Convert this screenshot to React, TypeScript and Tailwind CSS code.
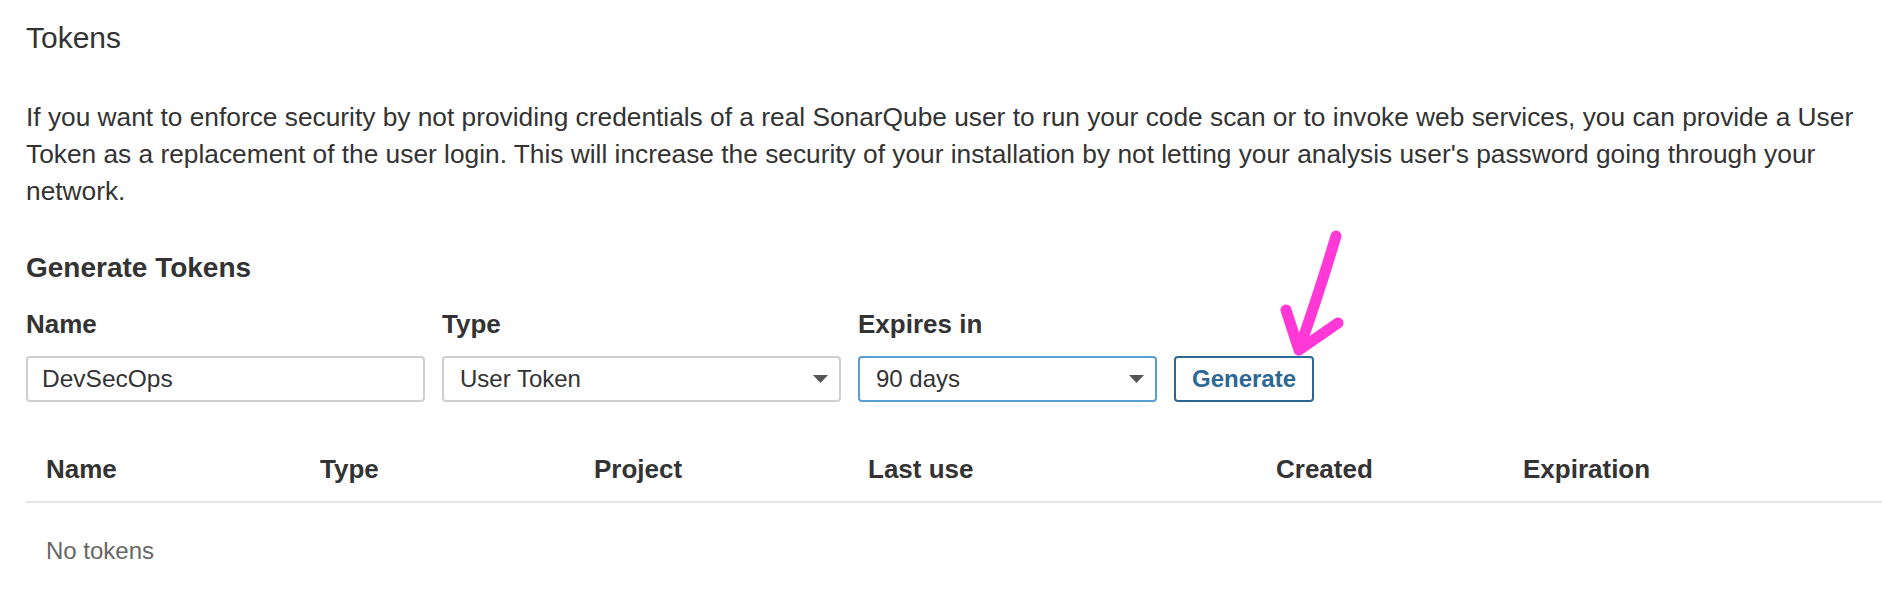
import React from "react";

function Caret() {
  return (
    <svg width="15" height="8" viewBox="0 0 15 8" className="shrink-0">
      <polygon points="0,0 15,0 7.5,8" fill="#555555" />
    </svg>
  );
}

export default function App() {
  const cols = ["Name", "Type", "Project", "Last use", "Created", "Expiration"];
  return (
    <div className="relative w-[1882px] h-[610px] overflow-hidden bg-white font-['Liberation_Sans',Arial,sans-serif] text-[#333333]">
      <div className="pl-[26px] pt-[21px]">
        <h2 className="text-[30px] leading-[34px] font-normal">Tokens</h2>
        <p className="mt-[44px] w-[1845px] text-[26.3px] leading-[37px]">
          If you want to enforce security by not providing credentials of a real SonarQube user to run your code scan or to invoke web services, you can provide a User Token as a replacement of the user login. This will increase the security of your installation by not letting your analysis user's password going through your network.
        </p>
        <h3 className="mt-[42px] text-[28px] leading-[32px] font-bold">Generate Tokens</h3>
        <div className="mt-[25px] flex items-end gap-[17px]">
          <div className="flex flex-col w-[399px]">
            <label className="text-[26px] leading-[30px] font-bold">Name</label>
            <div className="mt-[17px] h-[46px] border-2 border-[#cfcfcf] rounded-[4px] flex items-center pl-[14px] text-[24.5px]">
              DevSecOps
            </div>
          </div>
          <div className="flex flex-col w-[399px]">
            <label className="text-[26px] leading-[30px] font-bold">Type</label>
            <div className="mt-[17px] h-[46px] border-2 border-[#cfcfcf] rounded-[4px] flex items-center justify-between pl-[16px] pr-[11px] text-[24px]">
              <span>User Token</span>
              <Caret />
            </div>
          </div>
          <div className="flex flex-col w-[299px]">
            <label className="text-[26px] leading-[30px] font-bold">Expires in</label>
            <div className="mt-[17px] h-[46px] border-2 border-[#5c9dd3] rounded-[4px] flex items-center justify-between pl-[16px] pr-[11px] text-[24px]">
              <span>90 days</span>
              <Caret />
            </div>
          </div>
          <button className="w-[140px] h-[46px] border-2 border-[#2d6794] rounded-[4px] bg-white text-[#2d6794] text-[24px] font-bold flex items-center justify-center">
            Generate
          </button>
        </div>
        <div className="mt-[52px]">
          <div className="grid grid-cols-[274px_274px_274px_408px_247px_1fr] border-b-2 border-[#e6e6e6]">
            {cols.map((c) => (
              <div key={c} className="pl-[20px] pb-[17px] text-[26px] leading-[30px] font-bold">
                {c}
              </div>
            ))}
          </div>
          <div className="pl-[20px] pt-[34px] text-[24px] leading-[28px] text-[#666666]">No tokens</div>
        </div>
      </div>
      <svg className="absolute left-0 top-0 pointer-events-none" width="1882" height="610" viewBox="0 0 1882 610">
        <path
          d="M1336 236 Q1320 290 1299 350 M1286 310 L1299 350 L1338 323"
          fill="none"
          stroke="#ff38d6"
          strokeWidth="11"
          strokeLinecap="round"
          strokeLinejoin="round"
        />
      </svg>
    </div>
  );
}
